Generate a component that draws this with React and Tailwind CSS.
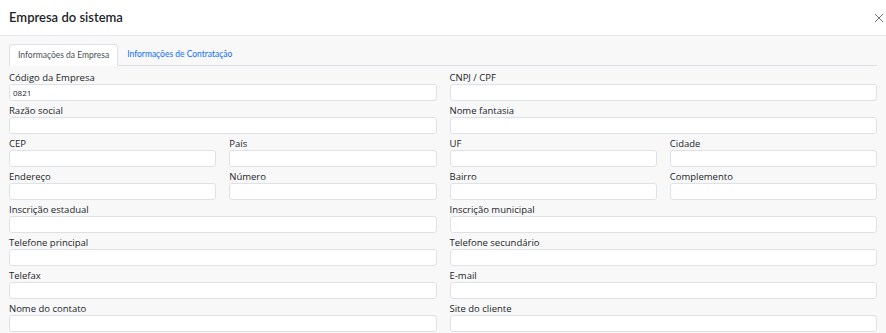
import React from 'react';

function Field({ label, value }) {
  return (
    <div className="flex flex-col">
      <label className="mt-[4px] text-[9.5px] leading-[12px] text-[#212529]">{label}</label>
      <input
        defaultValue={value}
        className="h-[17px] w-full rounded-[3px] border border-[#dee2e6] bg-white px-[3px] text-[8px] text-[#212529] outline-none"
      />
    </div>
  );
}

function Pair({ a, b }) {
  return (
    <div className="grid grid-cols-2 gap-x-[13px]">
      <Field label={a} />
      <Field label={b} />
    </div>
  );
}

export default function App() {
  return (
    <div className="h-[333px] w-[886px] overflow-hidden bg-[#f8f8f8] font-['Open_Sans',sans-serif]">
      <div className="flex h-[36px] items-center justify-between border-b border-[#e5e7eb] bg-white pl-[9px] pr-[2px]">
        <h1 className="font-['Lato',sans-serif] text-[13px] font-semibold text-[#212529]">Empresa do sistema</h1>
        <svg width="10" height="10" viewBox="0 0 10 10" className="text-[#6c757d]">
          <path d="M1 1L9 9M9 1L1 9" stroke="currentColor" strokeWidth="1" />
        </svg>
      </div>

      <div className="px-[9px] pt-[8px]">
        <div className="flex h-[22px] border-b border-[#dee2e6] font-['Lato',sans-serif] text-[8.5px]">
          <div className="-mb-px flex items-center rounded-t-[4px] border border-b-0 border-[#dee2e6] bg-white px-[8px] text-[#495057]">
            Informações da Empresa
          </div>
          <div className="flex items-center px-[9px] text-[#0d6efd]">
            Informações de Contratação
          </div>
        </div>

        <div className="grid grid-cols-2 gap-x-[13px] pt-[2px]">
          <Field label="Código da Empresa" value="0821" />
          <Field label="CNPJ / CPF" />
          <Field label="Razão social" />
          <Field label="Nome fantasia" />
          <Pair a="CEP" b="País" />
          <Pair a="UF" b="Cidade" />
          <Pair a="Endereço" b="Número" />
          <Pair a="Bairro" b="Complemento" />
          <Field label="Inscrição estadual" />
          <Field label="Inscrição municipal" />
          <Field label="Telefone principal" />
          <Field label="Telefone secundário" />
          <Field label="Telefax" />
          <Field label="E-mail" />
          <Field label="Nome do contato" />
          <Field label="Site do cliente" />
        </div>
      </div>
    </div>
  );
}
